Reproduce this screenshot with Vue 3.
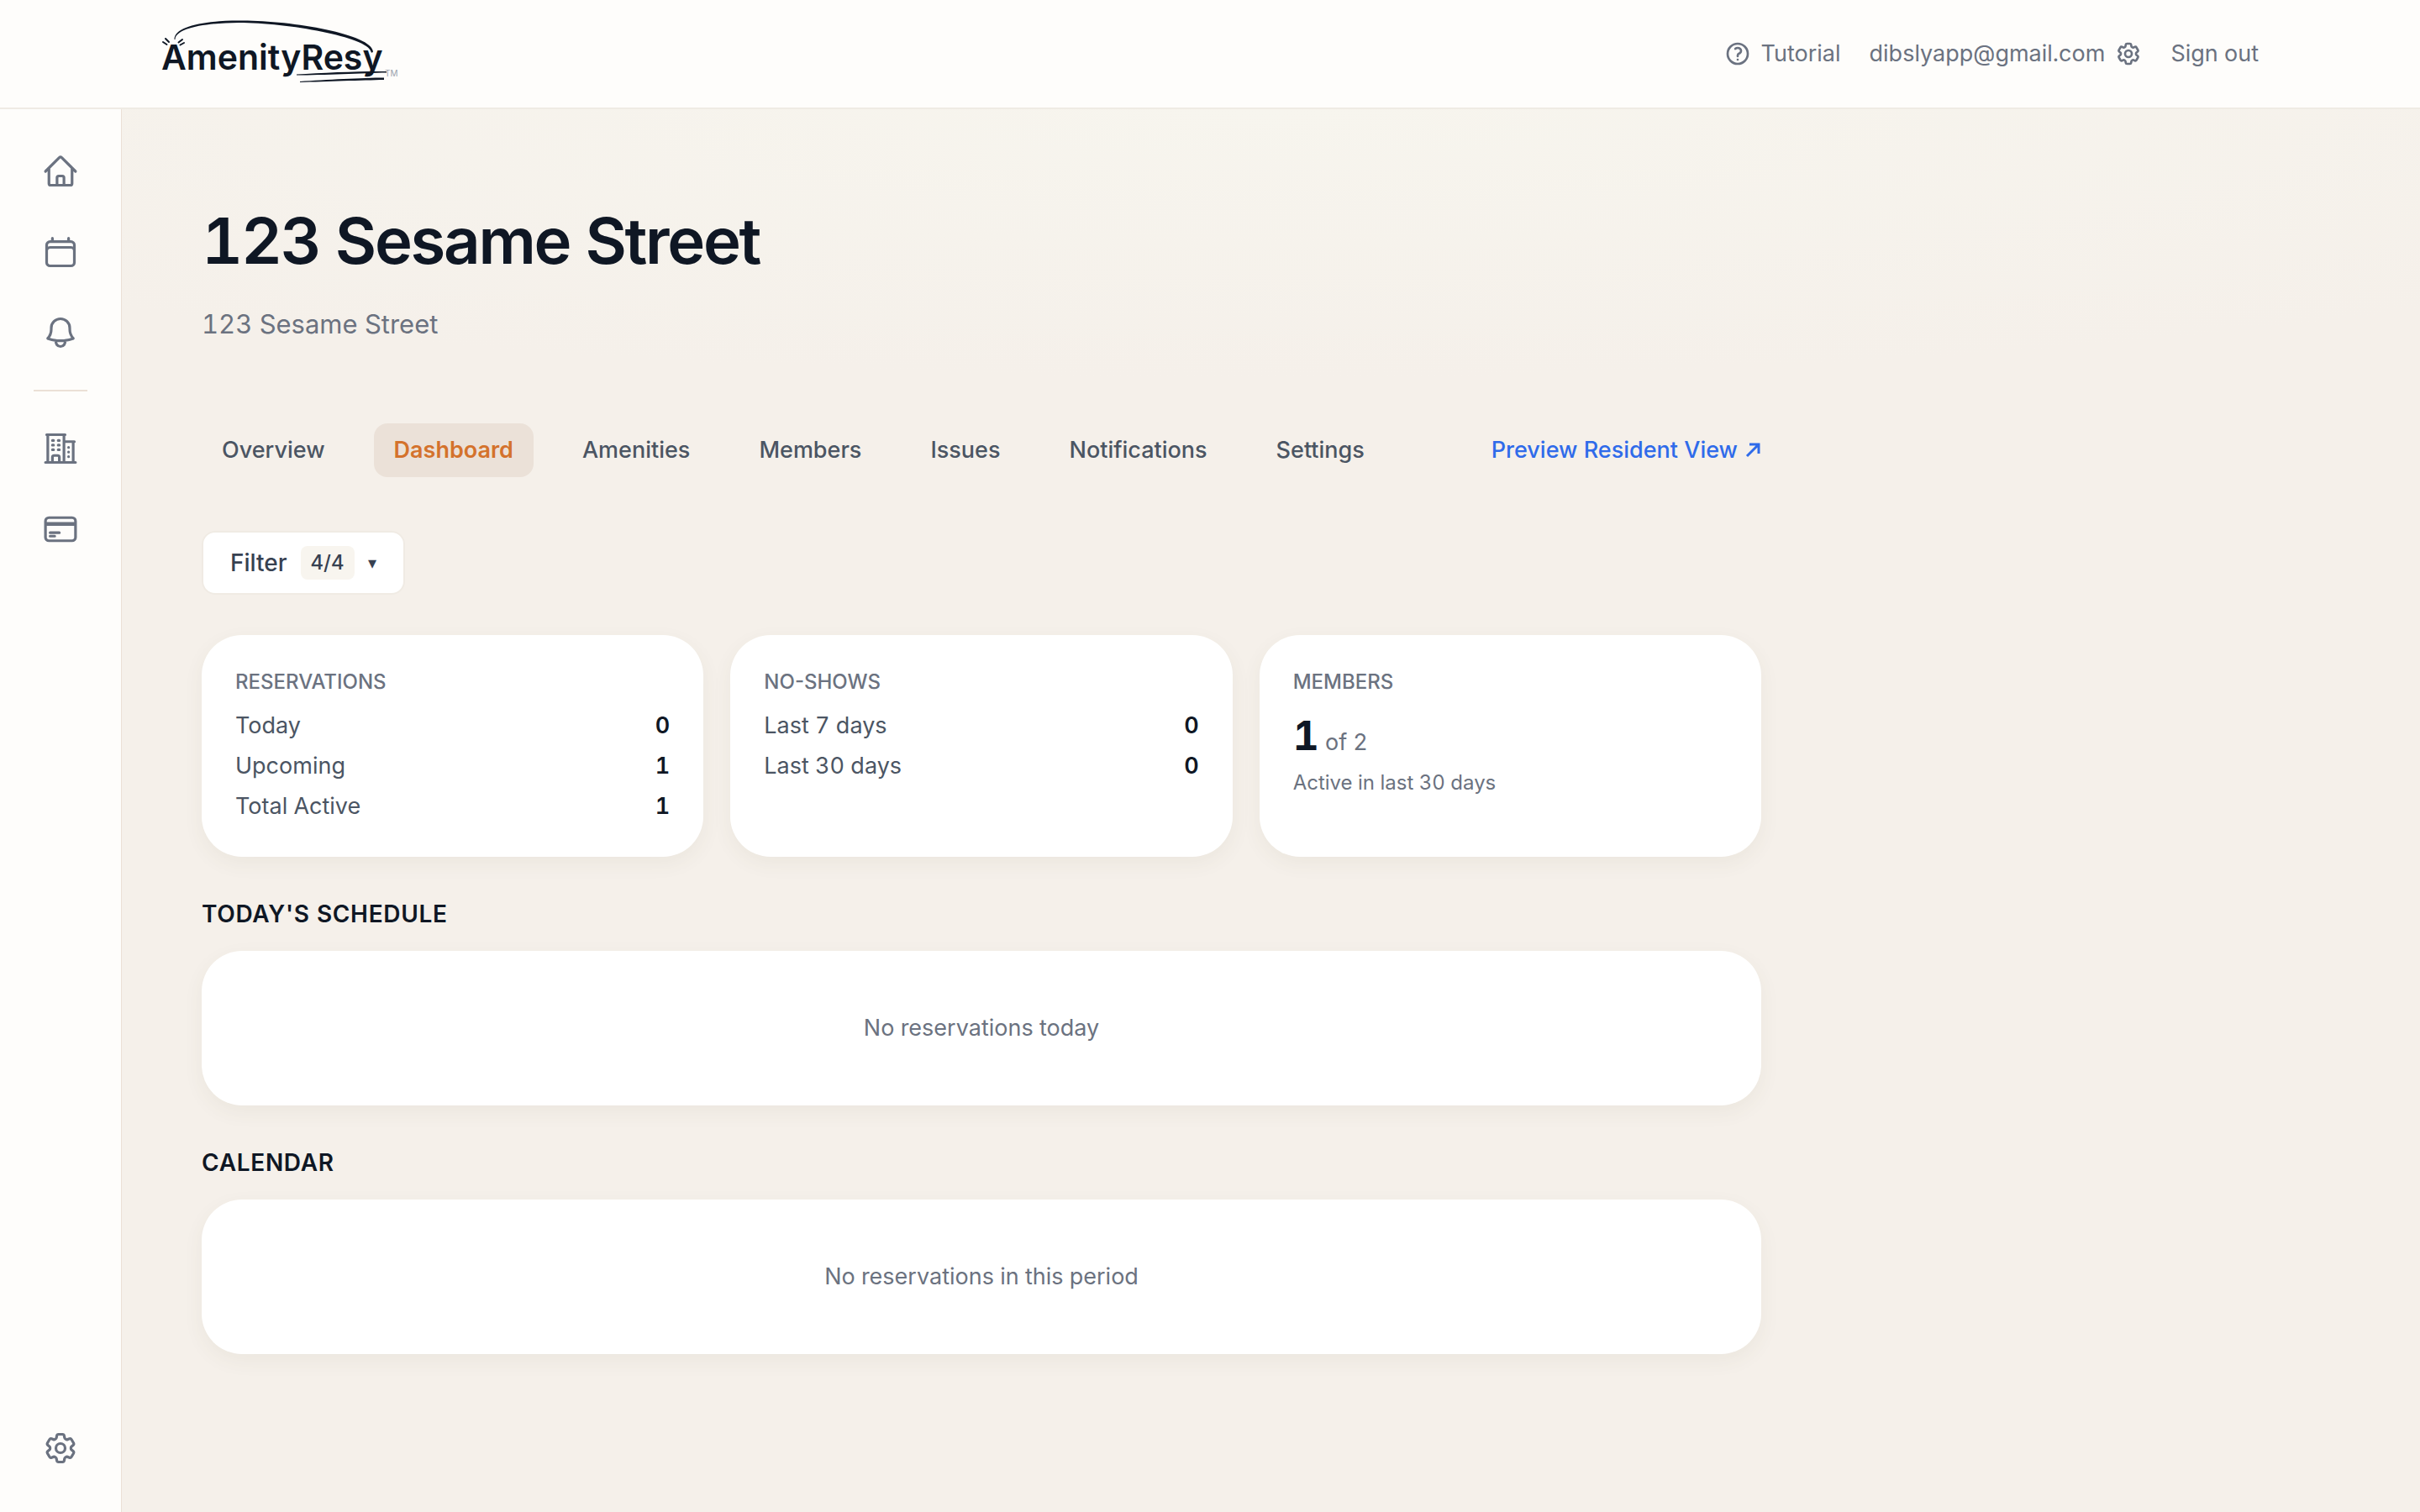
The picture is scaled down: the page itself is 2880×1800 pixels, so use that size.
<script setup>
const icons = {
  home: 'm2.25 12 8.954-8.955c.44-.439 1.152-.439 1.591 0L21.75 12M4.5 9.75v10.125c0 .621.504 1.125 1.125 1.125H9.75v-4.875c0-.621.504-1.125 1.125-1.125h2.25c.621 0 1.125.504 1.125 1.125V21h4.125c.621 0 1.125-.504 1.125-1.125V9.75M8.25 21h8.25',
  calendar: 'M6.75 3v2.25M17.25 3v2.25M3 18.75V7.5a2.25 2.25 0 0 1 2.25-2.25h13.5A2.25 2.25 0 0 1 21 7.5v11.25m-18 0A2.25 2.25 0 0 0 5.25 21h13.5A2.25 2.25 0 0 0 21 18.75m-18 0v-7.5A2.25 2.25 0 0 1 5.25 9h13.5A2.25 2.25 0 0 1 21 11.25v7.5',
  bell: 'M14.857 17.082a23.848 23.848 0 0 0 5.454-1.31A8.967 8.967 0 0 1 18 9.75V9A6 6 0 0 0 6 9v.75a8.967 8.967 0 0 1-2.312 6.022c1.733.64 3.56 1.085 5.455 1.31m5.714 0a24.255 24.255 0 0 1-5.714 0m5.714 0a3 3 0 1 1-5.714 0',
  building: 'M2.25 21h19.5m-18-18v18m10.5-18v18m6-13.5V21M6.75 6.75h.75m-.75 3h.75m-.75 3h.75m3-6h.75m-.75 3h.75m-.75 3h.75M6.75 21v-3.375c0-.621.504-1.125 1.125-1.125h2.25c.621 0 1.125.504 1.125 1.125V21M3 3h12m-.75 4.5H21m-3.75 3.75h.008v.008h-.008v-.008Zm0 3h.008v.008h-.008v-.008Zm0 3h.008v.008h-.008v-.008Z',
  card: 'M2.25 8.25h19.5M2.25 9h19.5m-16.5 5.25h6m-6 2.25h3m-3.75 3h15a2.25 2.25 0 0 0 2.25-2.25V6.75A2.25 2.25 0 0 0 19.5 4.5h-15a2.25 2.25 0 0 0-2.25 2.25v10.5A2.25 2.25 0 0 0 4.5 19.5Z',
  help: 'M9.879 7.519c1.171-1.025 3.071-1.025 4.242 0 1.172 1.025 1.172 2.687 0 3.712-.203.179-.43.326-.67.442-.745.361-1.45.999-1.45 1.827v.75M21 12a9 9 0 1 1-18 0 9 9 0 0 1 18 0Zm-9 5.25h.008v.008H12v-.008Z',
  gear: 'M9.594 3.94c.09-.542.56-.94 1.11-.94h2.593c.55 0 1.02.398 1.11.94l.213 1.281c.063.374.313.686.645.87.074.04.147.083.22.127.325.196.72.257 1.075.124l1.217-.456a1.125 1.125 0 0 1 1.37.49l1.296 2.247a1.125 1.125 0 0 1-.26 1.431l-1.003.827c-.293.241-.438.613-.43.992a7.723 7.723 0 0 1 0 .255c-.008.378.137.75.43.991l1.004.827c.424.35.534.955.26 1.43l-1.298 2.247a1.125 1.125 0 0 1-1.369.491l-1.217-.456c-.355-.133-.75-.072-1.076.124a6.47 6.47 0 0 1-.22.128c-.331.183-.581.495-.644.869l-.213 1.281c-.09.543-.56.94-1.11.94h-2.594c-.55 0-1.019-.398-1.11-.94l-.213-1.281c-.062-.374-.312-.686-.644-.87a6.52 6.52 0 0 1-.22-.127c-.325-.196-.72-.257-1.076-.124l-1.217.456a1.125 1.125 0 0 1-1.369-.49l-1.297-2.247a1.125 1.125 0 0 1 .26-1.431l1.004-.827c.292-.24.437-.613.43-.991a6.932 6.932 0 0 1 0-.255c.007-.38-.138-.751-.43-.992l-1.004-.827a1.125 1.125 0 0 1-.26-1.43l1.297-2.247a1.125 1.125 0 0 1 1.37-.491l1.216.456c.356.133.751.072 1.076-.124.072-.044.146-.086.22-.128.332-.183.582-.495.644-.869l.214-1.28ZM15 12a3 3 0 1 1-6 0 3 3 0 0 1 6 0Z',
}
const primaryNav = [
  { icon: 'home', label: 'Home' },
  { icon: 'calendar', label: 'Calendar' },
  { icon: 'bell', label: 'Alerts' },
]
const secondaryNav = [
  { icon: 'building', label: 'Buildings' },
  { icon: 'card', label: 'Billing' },
]
const tabs = ['Overview', 'Dashboard', 'Amenities', 'Members', 'Issues', 'Notifications', 'Settings']
const activeTab = 'Dashboard'
const stats = [
  { title: 'RESERVATIONS', rows: [['Today', 0], ['Upcoming', 1], ['Total Active', 1]] },
  { title: 'NO-SHOWS', rows: [['Last 7 days', 0], ['Last 30 days', 0]] },
]
const sections = [
  { title: "TODAY'S SCHEDULE", empty: 'No reservations today' },
  { title: 'CALENDAR', empty: 'No reservations in this period' },
]
</script>

<template>
  <div class="app">
    <header class="topbar">
      <a href="#" class="logo" aria-label="AmenityResy">
        <svg width="288" height="96" viewBox="0 0 288 96">
          <text x="0" y="67" class="wordmark">AmenityResy</text>
          <text x="266" y="75" class="tm">TM</text>
          <g class="ink">
            <path d="M15.500 31C15 16 50 8.500 92 8.500C150 7.500 251 24 252 45.500C251.500 47 249.500 47 249.500 45.500C246 28 150 11 92 11C50 11.500 17 18 16.500 31Z" />
            <path d="M161 72.500C192 70.500 240 68.500 268 69V70.500C240 71 192 73.500 161 73.500Z" />
            <path d="M165 81C195 79 240 76.500 265 76.500V79C240 79.500 195 81 165 82Z" />
          </g>
          <path class="rays" d="M5 30l4 4M2 34l4.500 3M25 31l-4.500 3.500M27 35l-4.500 2.500" />
        </svg>
      </a>
      <nav class="account">
        <a href="#" class="with-icon">
          <svg class="icon-sm" viewBox="0 0 24 24"><path :d="icons.help" /></svg>
          Tutorial
        </a>
        <a href="#" class="with-icon">
          dibslyapp@gmail.com
          <svg class="icon-sm" viewBox="0 0 24 24"><path :d="icons.gear" /></svg>
        </a>
        <a href="#">Sign out</a>
      </nav>
    </header>

    <div class="body">
      <nav class="sidebar" aria-label="Main">
        <a v-for="item in primaryNav" :key="item.icon" href="#" :aria-label="item.label">
          <svg class="icon" viewBox="0 0 24 24"><path :d="icons[item.icon]" /></svg>
        </a>
        <hr />
        <a v-for="item in secondaryNav" :key="item.icon" href="#" :aria-label="item.label">
          <svg class="icon" viewBox="0 0 24 24"><path :d="icons[item.icon]" /></svg>
        </a>
        <a href="#" class="bottom" aria-label="Settings">
          <svg class="icon" viewBox="0 0 24 24"><path :d="icons.gear" /></svg>
        </a>
      </nav>

      <main>
        <div class="content">
          <h1>123 Sesame Street</h1>
          <p class="address">123 Sesame Street</p>

          <nav class="tabs" aria-label="Property">
            <a v-for="tab in tabs" :key="tab" href="#" class="tab" :class="{ active: tab === activeTab }">{{ tab }}</a>
            <a href="#" class="preview">
              Preview Resident View
              <svg viewBox="0 0 20 20"><path d="M3 17L17 3M6 3h11v11" /></svg>
            </a>
          </nav>

          <button type="button" class="filter">
            Filter <span class="count">4/4</span> <span class="caret">▾</span>
          </button>

          <div class="stats">
            <section v-for="stat in stats" :key="stat.title" class="card stat">
              <h2>{{ stat.title }}</h2>
              <dl>
                <div v-for="[name, value] in stat.rows" :key="name">
                  <dt>{{ name }}</dt>
                  <dd>{{ value }}</dd>
                </div>
              </dl>
            </section>
            <section class="card stat">
              <h2>MEMBERS</h2>
              <p class="total"><strong>1</strong> of 2</p>
              <p class="note">Active in last 30 days</p>
            </section>
          </div>

          <section v-for="section in sections" :key="section.title" class="block">
            <h2>{{ section.title }}</h2>
            <div class="card empty">{{ section.empty }}</div>
          </section>
        </div>
      </main>
    </div>
  </div>
</template>

<style>
body {
  margin: 0;
}
</style>

<style scoped>
.app {
  display: flex;
  flex-direction: column;
  min-height: 100vh;
  font-family: Inter, "Liberation Sans", sans-serif;
  font-size: 27px;
  font-variant-numeric: tabular-nums;
  line-height: 40px;
  color: #4b5563;
}
.app *,
.app *::before {
  box-sizing: border-box;
}
a {
  color: inherit;
  text-decoration: none;
}
h1,
h2,
p,
dl,
dd {
  margin: 0;
}
svg {
  display: block;
  flex: none;
}
.topbar {
  display: flex;
  align-items: center;
  justify-content: space-between;
  height: 130px;
  padding: 0 192px;
  background: #fefdfb;
  border-bottom: 2px solid #efebe4;
}
.wordmark {
  font-size: 41px;
  font-weight: 600;
  fill: #0f1724;
}
.tm {
  font-size: 10px;
  fill: #9ca3af;
}
.ink {
  fill: #0f1724;
}
.rays {
  fill: none;
  stroke: #0f1724;
  stroke-width: 2;
  stroke-linecap: round;
}
.account {
  display: flex;
  align-items: center;
  gap: 34px;
  color: #6b7280;
}
.with-icon {
  display: flex;
  align-items: center;
  gap: 12px;
}
.icon,
.icon-sm {
  fill: none;
  stroke: currentColor;
  stroke-linecap: round;
  stroke-linejoin: round;
}
.icon {
  width: 44px;
  height: 44px;
  stroke-width: 1.75;
}
.icon-sm {
  width: 32px;
  height: 32px;
  stroke-width: 2;
}
.body {
  display: flex;
  flex: 1;
}
.sidebar {
  display: flex;
  flex-direction: column;
  align-items: center;
  gap: 16px;
  width: 145px;
  padding: 34px 0 36px;
  background: #fefdfb;
  border-right: 1px solid #ebe0d6;
  color: #6b7280;
}
.sidebar a {
  display: grid;
  place-items: center;
  width: 80px;
  height: 80px;
}
.sidebar hr {
  width: 64px;
  height: 2px;
  margin: 12px 0;
  border: 0;
  background: #ebe0d6;
}
.sidebar .bottom {
  margin-top: auto;
}
main {
  flex: 1;
  padding: 112px 95px;
  background: radial-gradient(ellipse 75% 320px at 50% 0, #f7f5ee, #f5f0ea) #f5f0ea;
}
.content {
  max-width: 1856px;
}
h1 {
  font-size: 76px;
  font-weight: 600;
  line-height: 88px;
  letter-spacing: -0.03em;
  color: #0f1724;
}
.address {
  margin-top: 32px;
  font-size: 31px;
  line-height: 48px;
  color: #6b7280;
}
.tabs {
  display: flex;
  align-items: center;
  gap: 34px;
  margin-top: 94px;
  font-weight: 500;
}
.tab {
  padding: 12px 24px;
  border-radius: 16px;
}
.tab.active {
  background: #ebe1d8;
  color: #d4722c;
  font-weight: 600;
}
.preview {
  display: flex;
  align-items: center;
  gap: 8px;
  margin-left: auto;
  color: #2f6bea;
}
.preview svg {
  width: 20px;
  height: 20px;
  fill: none;
  stroke: currentColor;
  stroke-width: 3;
}
.filter {
  display: flex;
  align-items: center;
  gap: 16px;
  margin-top: 64px;
  padding: 16px 32px;
  border: 2px solid #f0ebe4;
  border-radius: 16px;
  background: #fff;
  color: #374151;
  font: inherit;
  font-size: 28px;
  font-weight: 500;
}
.count {
  padding: 4px 12px;
  border-radius: 8px;
  background: #f8f5ef;
  font-size: 24px;
  line-height: 32px;
}
.caret {
  font-size: 20px;
}
.stats {
  display: grid;
  grid-template-columns: repeat(3, 1fr);
  gap: 32px;
  margin-top: 48px;
}
.card {
  border-radius: 48px;
  background: #fff;
  box-shadow: 0 8px 24px rgba(90, 90, 50, 0.06);
}
.stat {
  padding: 40px;
}
.stat h2 {
  margin-bottom: 16px;
  font-size: 24px;
  font-variant-numeric: normal;
  font-weight: 500;
  line-height: 32px;
  color: #6b7280;
}
dl {
  display: grid;
  gap: 8px;
}
dl div {
  display: flex;
  justify-content: space-between;
}
dd {
  font-size: 27px;
  font-weight: 600;
  color: #0f1724;
}
.total {
  color: #6b7280;
}
.total strong {
  font-size: 48px;
  font-weight: 700;
  line-height: 64px;
  color: #0f1724;
}
.note {
  margin-top: 8px;
  font-size: 24px;
  line-height: 32px;
  color: #6b7280;
}
.block {
  margin-top: 48px;
}
.block h2 {
  margin-bottom: 24px;
  font-size: 28px;
  font-weight: 600;
  line-height: 40px;
  letter-spacing: 0.025em;
  color: #0f1724;
}
.empty {
  padding: 72px 40px;
  text-align: center;
  color: #6b7280;
}
</style>
